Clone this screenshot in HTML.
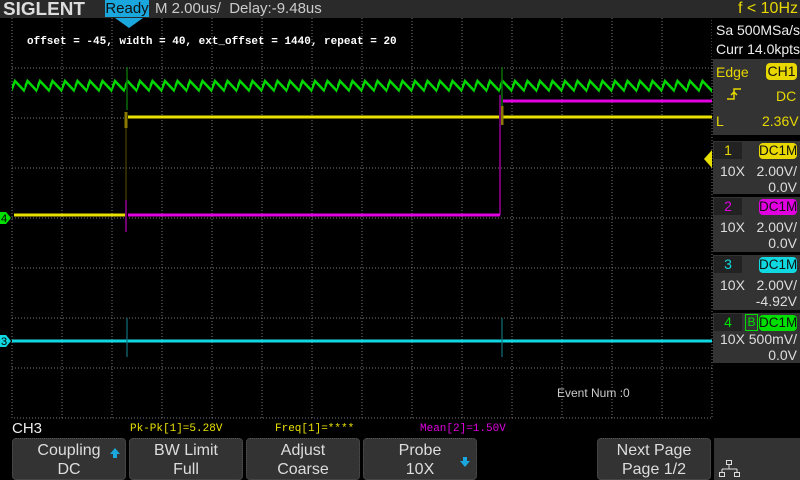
<!DOCTYPE html>
<html><head><meta charset="utf-8"><style>
body{margin:0;width:800px;height:480px;background:#000;overflow:hidden;position:relative;font-family:"Liberation Sans",sans-serif}
.a{position:absolute;white-space:nowrap}
.top{left:0;top:0;width:800px;height:18px;background:#2a2a2a}
.logo{left:3px;top:-1px;font:900 18px "Liberation Sans",sans-serif;color:#ddd;transform:scaleX(1.05);transform-origin:left}
.ready{left:105px;top:0;width:44px;height:17px;background:#1aa7dd;color:#111;font-size:15px;line-height:17px;text-align:center}
.t{color:#ccc;font-size:15px;line-height:18px}
.rp{background:#333;color:#ddd;font-size:14px}
.s{color:#ddd;font-size:14px;line-height:16px}
.btn{top:438px;height:42px;background:#333;border:1px dotted #555;border-radius:4px;color:#ddd;font-size:16px;line-height:19px;text-align:center;box-sizing:border-box;padding-top:2px}
.mono{font-family:"Liberation Mono",monospace;font-size:11px}
</style></head><body>
<div class="a top"></div>
<div class="a logo">SIGLENT</div>
<div class="a ready">Ready</div>
<div class="a t" style="left:155px;top:0">M 2.00us/&nbsp; Delay:-9.48us</div>
<div class="a" style="left:115px;top:18px;width:0;height:0;border-left:14px solid transparent;border-right:14px solid transparent;border-top:10px solid #1aa7dd"></div>
<div class="a" style="left:712px;top:0;width:88px;height:18px;background:#2a2a2a;color:#e8d800;font-size:16px;text-align:right;padding-right:2px;box-sizing:border-box">f &lt; 10Hz</div>
<svg class="a" style="left:0;top:0" width="800" height="480">
<defs>
<pattern id="g" x="12" y="0" width="12.5" height="480" patternUnits="userSpaceOnUse">
<path d="M-1,91 L3,81 L12.5,91 L16.5,81" stroke="#00d800" stroke-width="2.5" fill="none"/>
</pattern>
</defs>
<g stroke="#777" stroke-width="1" stroke-dasharray="1,2">
<path d="M62,18V418M112,18V418M162,18V418M212,18V418M262,18V418M312,18V418M362,18V418M412,18V418M462,18V418M512,18V418M562,18V418M612,18V418M662,18V418"/>
<path d="M12,68H712M12,118H712M12,168H712M12,218H712M12,268H712M12,318H712M12,368H712"/>
<path d="M12,18V418H712V18" fill="none"/>
</g>
<rect x="12" y="76" width="700" height="20" fill="url(#g)"/>
<path d="M127,67V110M502,67V110" stroke="#0a6a0a" stroke-width="1.5"/>
<path d="M126,215V117" stroke="#5a5000" stroke-width="1"/>
<path d="M14,215H126M128,117H712" stroke="#e8e000" stroke-width="3" fill="none"/>
<path d="M126,112V128M502,106V125" stroke="#8a7a00" stroke-width="3"/>
<path d="M500,215V101" stroke="#c000c0" stroke-width="1.2"/>
<path d="M128,215H500M503,101H712" stroke="#e000e0" stroke-width="3" fill="none"/>
<path d="M126,200V232M500,95V135" stroke="#700070" stroke-width="2"/>
<path d="M12,341H712" stroke="#10d8e0" stroke-width="3"/>
<path d="M127,318V357M502,318V357" stroke="#10707a" stroke-width="1.2"/>
<path d="M0,212H6L11,218L6,224H0Z" fill="#00e000"/>
<text x="1" y="222" font-size="11" fill="#000" font-family="Liberation Sans">4</text>
<path d="M0,335H6L11,341L6,347H0Z" fill="#10d8e0"/>
<text x="1" y="345" font-size="11" fill="#000" font-family="Liberation Sans">3</text>
<path d="M712,150L704,159L712,168Z" fill="#e8e000"/>
</svg>
<div class="a mono" style="left:27px;top:36px;color:#fff;font-weight:bold">offset = -45, width = 40, ext_offset = 1440, repeat = 20</div>
<div class="a" style="left:557px;top:386px;color:#ccc;font-size:12px">Event Num :0</div>
<div class="a" style="left:712px;top:18px;width:88px;height:40px;background:#000"></div>
<div class="a s" style="left:716px;top:22px;color:#eee">Sa 500MSa/s</div>
<div class="a s" style="left:716px;top:41px;color:#eee">Curr 14.0kpts</div>
<div class="a rp" style="left:713px;top:59px;width:87px;height:76px"></div>
<div class="a s" style="left:716px;top:64px;color:#e8d800">Edge</div>
<div class="a" style="left:766px;top:63px;width:31px;height:17px;background:#e8d800;border-radius:4px;color:#111;font-size:14px;text-align:center;line-height:17px">CH1</div>
<svg class="a" style="left:725px;top:86px" width="20" height="16"><path d="M2,13H9V3H16M6,9L9,6L12,9" stroke="#e8d800" stroke-width="1.5" fill="none"/></svg>
<div class="a s" style="left:776px;top:88px;color:#e8d800">DC</div>
<div class="a s" style="left:716px;top:113px;color:#e8d800">L</div>
<div class="a s" style="left:762px;top:113px;color:#e8d800">2.36V</div>
<div class="a rp" style="left:713px;top:141px;width:87px;height:53px"></div>
<div class="a rp" style="left:713px;top:197px;width:87px;height:55px"></div>
<div class="a rp" style="left:713px;top:255px;width:87px;height:55px"></div>
<div class="a rp" style="left:713px;top:313px;width:87px;height:50px"></div>
<div class="a" style="left:714px;top:142px;width:28px;height:17px;background:#222;color:#e8d800;font-size:14px;text-align:center">1</div>
<div class="a" style="left:759px;top:143px;width:38px;height:16px;background:#e8d800;border-radius:4px;color:#111;font-size:13.5px;text-align:center;line-height:16px">DC1M</div>
<div class="a" style="left:714px;top:198px;width:28px;height:17px;background:#222;color:#e000e0;font-size:14px;text-align:center">2</div>
<div class="a" style="left:759px;top:199px;width:38px;height:16px;background:#e000e0;border-radius:4px;color:#111;font-size:13.5px;text-align:center;line-height:16px">DC1M</div>
<div class="a" style="left:714px;top:256px;width:28px;height:17px;background:#222;color:#10d8e0;font-size:14px;text-align:center">3</div>
<div class="a" style="left:759px;top:257px;width:38px;height:16px;background:#10d8e0;border-radius:4px;color:#111;font-size:13.5px;text-align:center;line-height:16px">DC1M</div>
<div class="a" style="left:714px;top:314px;width:28px;height:17px;background:#222;color:#00e000;font-size:14px;text-align:center">4</div>
<div class="a" style="left:745px;top:314px;width:11px;height:15px;border:1px solid #00e000;color:#00e000;font-size:12px;text-align:center;line-height:15px">B</div>
<div class="a" style="left:759px;top:315px;width:38px;height:16px;background:#00e000;border-radius:4px;color:#111;font-size:13.5px;text-align:center;line-height:16px">DC1M</div>
<div class="a s" style="left:720px;top:163px">10X</div><div class="a s" style="right:3px;top:163px">2.00V/</div><div class="a s" style="right:3px;top:179px">0.0V</div>
<div class="a s" style="left:720px;top:219px">10X</div><div class="a s" style="right:3px;top:219px">2.00V/</div><div class="a s" style="right:3px;top:235px">0.0V</div>
<div class="a s" style="left:720px;top:277px">10X</div><div class="a s" style="right:3px;top:277px">2.00V/</div><div class="a s" style="right:3px;top:293px">-4.92V</div>
<div class="a s" style="left:720px;top:331px">10X</div><div class="a s" style="right:3px;top:331px">500mV/</div><div class="a s" style="right:3px;top:347px">0.0V</div>
<div class="a" style="left:12px;top:420px;color:#eee;font-size:15px">CH3</div>
<div class="a mono" style="left:130px;top:423px;color:#e8e000">Pk-Pk[1]=5.28V</div>
<div class="a mono" style="left:275px;top:423px;color:#e8e000">Freq[1]=****</div>
<div class="a mono" style="left:420px;top:423px;color:#e000e0">Mean[2]=1.50V</div>
<div class="a btn" style="left:12px;width:114px">Coupling<br>DC</div>
<div class="a btn" style="left:129px;width:114px">BW Limit<br>Full</div>
<div class="a btn" style="left:246px;width:114px">Adjust<br>Coarse</div>
<div class="a btn" style="left:363px;width:114px">Probe<br>10X</div>
<div class="a btn" style="left:597px;width:114px">Next Page<br>Page 1/2</div>
<div class="a" style="left:714px;top:438px;width:86px;height:42px;background:#333"></div>
<svg class="a" style="left:0;top:0" width="800" height="480">
<path d="M110,454L115,448L120,454H117V458H113V454Z" fill="#1aa7dd"/>
<path d="M460,461L465,467L470,461H467V457H463V461Z" fill="#1aa7dd"/>
<g stroke="#ddd" stroke-width="1" fill="none"><rect x="726.5" y="460.5" width="5" height="4"/><path d="M729,465V469M722,469H737M722,469V472M737,469V472"/><rect x="719.5" y="472.5" width="5" height="4"/><rect x="734.5" y="472.5" width="5" height="4"/></g>
</svg>
</body></html>
